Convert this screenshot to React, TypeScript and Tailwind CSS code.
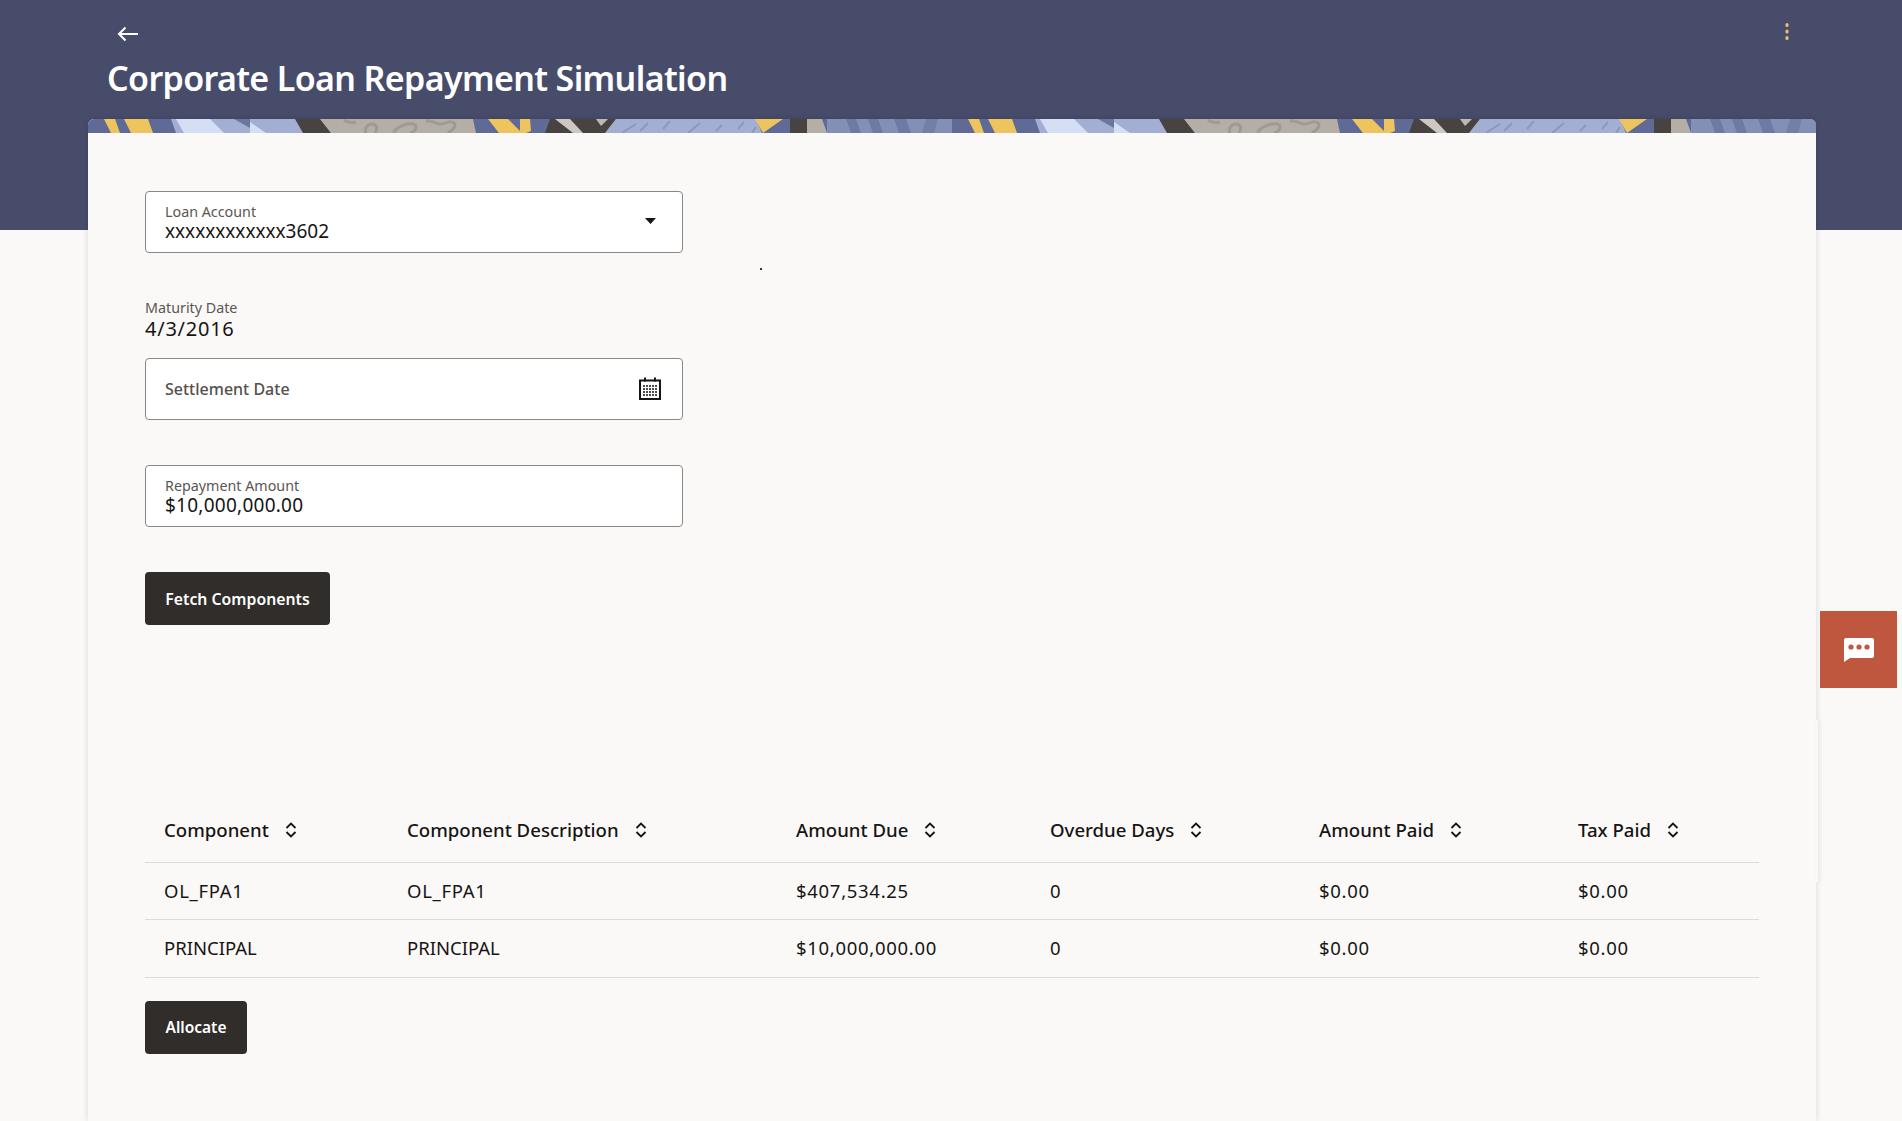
import React from "react";

const rows = [
  ["OL_FPA1", "OL_FPA1", "$407,534.25", "0", "$0.00", "$0.00"],
  ["PRINCIPAL", "PRINCIPAL", "$10,000,000.00", "0", "$0.00", "$0.00"],
];
const headers = ["Component", "Component Description", "Amount Due", "Overdue Days", "Amount Paid", "Tax Paid"];

const SortIcon = () => (
  <svg width="12" height="16" viewBox="0 0 12 16" fill="none" stroke="#161513" strokeWidth="1.8" className="ml-4 shrink-0">
    <path d="M1.5 6 6 1.5 10.5 6" />
    <path d="M1.5 10 6 14.5 10.5 10" />
  </svg>
);

// one repeat of the banner artwork, 864px wide
const Tile = ({ x }: { x: number }) => (
  <g transform={`translate(${x} 0)`}>
    <rect width="864" height="14" fill="#5f6b96" />
    <polygon points="16,0 27,0 32,14 23,14" fill="#eec45f" />
    <polygon points="36,0 60,0 65,14 43,14" fill="#eec45f" />
    <polygon points="83,0 208,0 216,14 88,14" fill="#a2afd2" />
    <polygon points="88,0 122,0 136,14 96,14" fill="#d4dff5" />
    <polygon points="146,0 162,0 162,9" fill="#69769f" />
    <polygon points="162,3 178,14 162,14" fill="#d4dff5" />
    <polygon points="207,0 232,0 243,14 215,14" fill="#474340" />
    <polygon points="232,0 385,0 388,14 243,14" fill="#b3afa6" />
    <g fill="none" stroke="#9f9b93" strokeWidth="3">
      <path d="M256 1c4 3 8 3 12 2M278 14c-2-5 2-9 6-9 5 0 6 4 3 9" />
      <path d="M306 14c0-4 6-6 10-8 5-2 12-2 12 2 0 3-3 5-6 6" />
      <path d="M338 2c5-1 9 2 13 3 4 1 8-3 13-2 4 1 4 5 0 8l-4 3" />
    </g>
    <polygon points="400,0 420,0 434,14 411,14" fill="#eec45f" />
    <polygon points="432,0 442,0 443,12 438,14 432,14" fill="#eec45f" />
    <polygon points="462,0 528,0 517,14 457,14" fill="#474340" />
    <polygon points="467,0 482,0 495,14 485,14" fill="#cdc9c2" />
    <polygon points="508,0 520,0 513,7" fill="#bdb9b1" />
    <polygon points="528,0 668,0 674,14 517,14" fill="#a2afd2" />
    <g fill="none" stroke="#8c99bc" strokeWidth="2">
      <path d="M534 14 548 5M552 12 560 4M575 10 582 2M600 14 612 4M628 12 634 6M650 10 656 3M664 14 668 8" />
    </g>
    <polygon points="667,0 695,0 675,14" fill="#eec45f" />
    <rect x="695" width="7" height="14" fill="#5f6b96" />
    <rect x="702" width="17" height="14" fill="#474340" />
    <polygon points="719,0 734,0 739,14 719,14" fill="#b3afa6" />
    <rect x="739" width="125" height="14" fill="#8390b6" />
    <polygon points="758,0 768,0 773,14 763,14" fill="#6d7aa3" />
    <polygon points="780,0 790,0 795,14 785,14" fill="#6d7aa3" />
    <polygon points="806,0 818,0 823,14 811,14" fill="#6d7aa3" />
    <polygon points="838,0 850,0 846,14 834,14" fill="#727fa7" />
  </g>
);

const Field = ({ label, value }: { label: string; value: string }) => (
  <div className="flex h-[62px] w-[538px] flex-col justify-center rounded-[4px] border border-[#8b8783] bg-white px-[19px]">
    <span className="text-[14.3px] leading-[17px] text-[#5b5652]">{label}</span>
    <span className="text-[19px] leading-[22px] text-[#161513]">{value}</span>
  </div>
);

export default function App() {
  return (
    <div className="flex h-screen flex-col overflow-hidden bg-[#fbf9f8] font-['Noto_Sans',sans-serif] text-[#161513]">
      <header className="h-[230px] shrink-0 bg-[#484c6b] pl-[107px] pr-[113px] pt-[24px]">
        <div className="flex items-center justify-between">
          <svg width="22" height="20" viewBox="0 0 22 20" fill="none" stroke="#fff" strokeWidth="2" className="ml-[10px]">
            <path d="M21 10H2M8.5 3.5 2 10l6.5 6.5" />
          </svg>
          <svg width="4" height="18" viewBox="0 0 4 18" fill="#f0bf6f" className="-mt-[1px] self-start">
            <rect x="0.5" y="0" width="3" height="4" rx="1.5" />
            <rect x="0.5" y="6.5" width="3" height="4" rx="1.5" />
            <rect x="0.5" y="13" width="3" height="4" rx="1.5" />
          </svg>
        </div>
        <h1 className="mt-[11px] text-[34px] font-semibold leading-[46px] tracking-[-0.64px] text-white">
          Corporate Loan Repayment Simulation
        </h1>
      </header>

      <main className="relative z-10 ml-[88px] mt-[-111px] w-[1728px] flex-1 rounded-t-[6px] bg-[#fbf9f8] shadow-[0_0_6px_rgba(0,0,0,0.14)]">
        <svg width="1728" height="14" viewBox="0 0 1728 14" className="block rounded-t-[6px]">
          <Tile x={0} />
          <Tile x={864} />
        </svg>

        <span className="absolute left-[672px] top-[149px] h-[2px] w-[2px] bg-[#333]" />
        <span className="absolute right-[-2px] top-[601px] h-[162px] w-[2px] bg-[#fbf9f8] shadow-[2px_0_4px_rgba(0,0,0,0.08)]" />

        <div className="pl-[57px] pt-[58px]">
          <div className="relative">
            <Field label="Loan Account" value="xxxxxxxxxxxx3602" />
            <svg width="11" height="6" viewBox="0 0 11 6" className="absolute left-[500px] top-[27px]">
              <path d="M0 0h11L5.5 6z" fill="#161513" />
            </svg>
          </div>

          <div className="mt-[46px] text-[14.3px] leading-[17px] text-[#5b5652]">Maturity Date</div>
          <div className="text-[20px] leading-[25px] tracking-[0.75px]">4/3/2016</div>

          <div className="mt-[17px] flex h-[62px] w-[538px] items-center justify-between rounded-[4px] border border-[#8b8783] bg-white pl-[19px] pr-[21px]">
            <span className="text-[16px] font-medium text-[#55504c]">Settlement Date</span>
            <svg width="22" height="23" viewBox="0 0 22 23" fill="none" className="-mt-[2px]">
              <rect x="1" y="3.5" width="20" height="18.5" stroke="#161513" strokeWidth="2" />
              <path d="M6 0.5v4M16 0.5v4" stroke="#161513" strokeWidth="2" />
              <path d="M4 9h14M4 12h14M4 15h14M4 18h14" stroke="#161513" strokeWidth="1.5" strokeDasharray="2 1" />
            </svg>
          </div>

          <div className="mt-[45px] [&>div>span:last-child]:tracking-[0.25px]">
            <Field label="Repayment Amount" value="$10,000,000.00" />
          </div>

          <button className="mt-[45px] flex h-[53px] w-[185px] items-center justify-center rounded-[4px] bg-[#312d2a] pt-[2px] text-[15.8px] font-semibold text-white">
            Fetch Components
          </button>

          <table className="mt-[177px] w-[1614px] table-fixed border-collapse text-left">
            <colgroup>
              <col className="w-[243px]" />
              <col className="w-[389px]" />
              <col className="w-[254px]" />
              <col className="w-[269px]" />
              <col className="w-[259px]" />
              <col className="w-[200px]" />
            </colgroup>
            <thead>
              <tr className="h-[60px] border-b border-[#dfdcd8]">
                {headers.map((h) => (
                  <th key={h} className="pb-[3px] pl-[19px] text-[18.6px] font-medium">
                    <span className="flex items-center">
                      {h}
                      <SortIcon />
                    </span>
                  </th>
                ))}
              </tr>
            </thead>
            <tbody>
              {rows.map((row) => (
                <tr key={row[0]} className="h-[57.5px] border-b border-[#dfdcd8]">
                  {row.map((c, i) => (
                    <td key={i} className={c === "PRINCIPAL" ? "pl-[19px] text-[18.5px]" : "pl-[19px] text-[18.5px] tracking-[0.7px]"}>
                      {c}
                    </td>
                  ))}
                </tr>
              ))}
            </tbody>
          </table>

          <button className="mt-[23px] flex h-[53px] w-[102px] items-center justify-center rounded-[4px] bg-[#312d2a] pt-[2px] text-[15.5px] font-semibold text-white">
            Allocate
          </button>
        </div>
      </main>

      <button className="absolute left-[1820px] top-[611px] z-20 flex h-[77px] w-[77px] items-center justify-center bg-[#bf563e]">
        <svg width="30" height="24" viewBox="0 0 30 24">
          <path d="M2 0h26a2 2 0 0 1 2 2v16a2 2 0 0 1-2 2H6l-6 4V2a2 2 0 0 1 2-2z" fill="#fff" />
          <circle cx="7" cy="9" r="2.6" fill="#bf563e" />
          <circle cx="15" cy="9" r="2.6" fill="#bf563e" />
          <circle cx="23" cy="9" r="2.6" fill="#bf563e" />
        </svg>
      </button>
    </div>
  );
}
